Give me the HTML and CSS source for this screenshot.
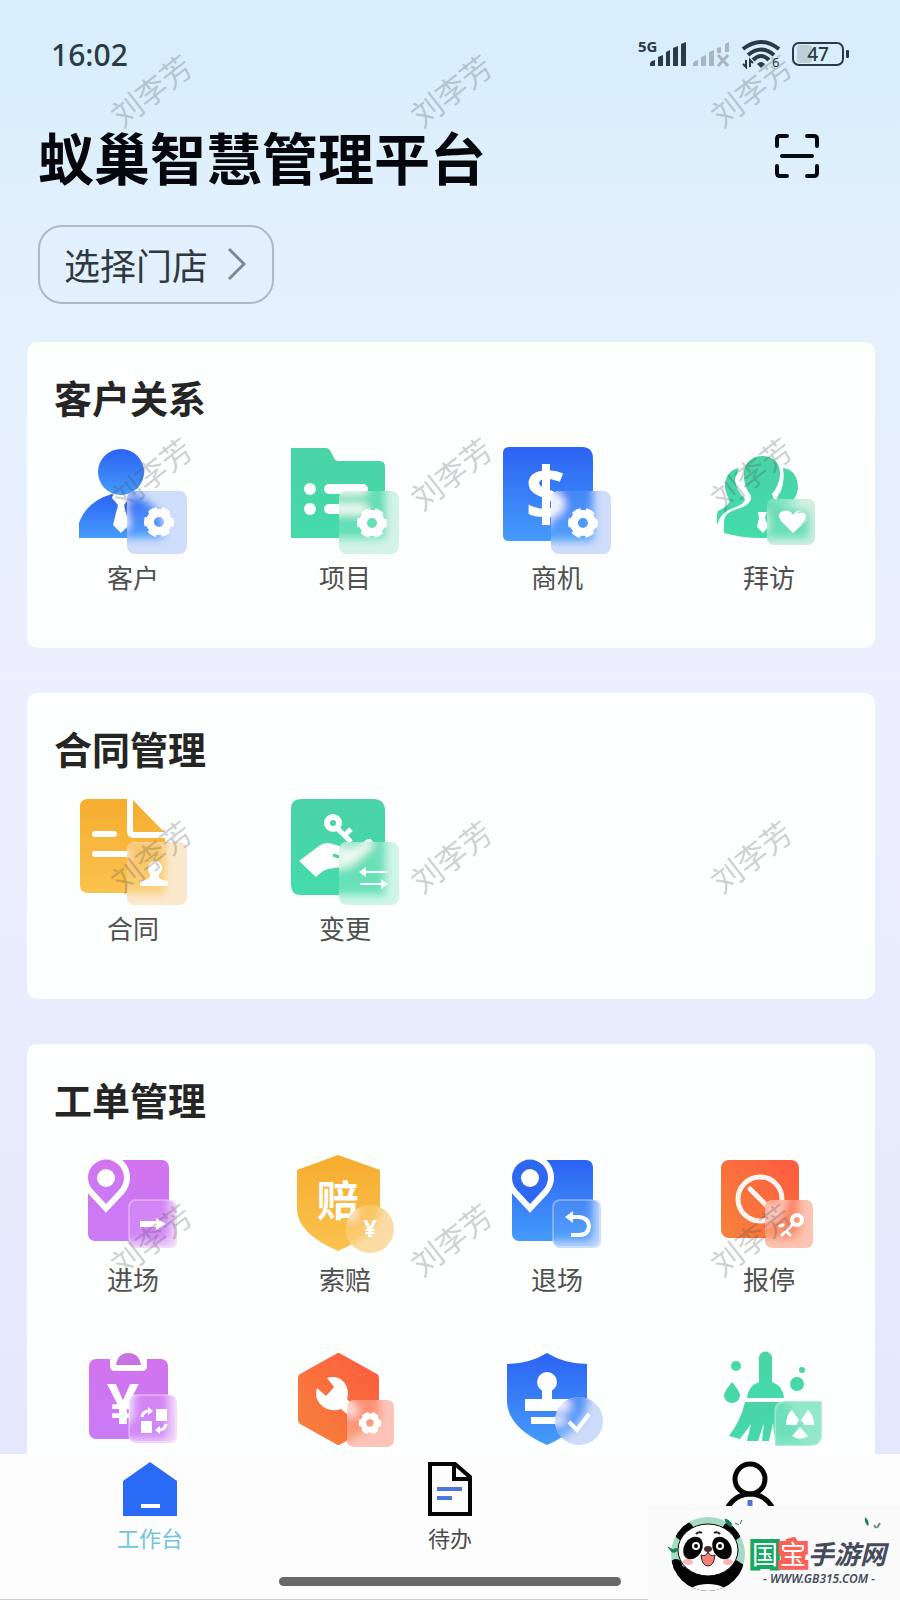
FILE: index.html
```html
<!DOCTYPE html>
<html lang="zh-CN">
<head>
    <meta charset="UTF-8">
    <meta name="viewport" content="width=device-width, initial-scale=1.0">
    <title>蚁巢智慧管理平台</title>
    <link rel="stylesheet" href="styles.css">
</head>
<body>
    <!-- shared gradients, filter and gear -->
    <svg class="defs" width="0" height="0" aria-hidden="true">
        <defs>
            <linearGradient id="blue" x1="0" y1="0" x2="0" y2="1"><stop offset="0" stop-color="#2c63f3"/><stop offset="1" stop-color="#459bfa"/></linearGradient>
            <linearGradient id="green" x1="0" y1="0" x2="0" y2="1"><stop offset="0" stop-color="#4ad3a6"/><stop offset="1" stop-color="#44dbaa"/></linearGradient>
            <linearGradient id="yellow" x1="0" y1="0" x2="0" y2="1"><stop offset="0" stop-color="#f6ac2f"/><stop offset="1" stop-color="#fac34f"/></linearGradient>
            <linearGradient id="purple" x1="0" y1="0" x2="0" y2="1"><stop offset="0" stop-color="#d273ee"/><stop offset="1" stop-color="#ca7bf7"/></linearGradient>
            <linearGradient id="red" x1="1" y1="0" x2="0" y2="1"><stop offset="0" stop-color="#fd5a3f"/><stop offset="1" stop-color="#f7833c"/></linearGradient>
            <filter id="frost" x="-20%" y="-20%" width="140%" height="140%"><feGaussianBlur stdDeviation="4"/></filter>
            <clipPath id="clip-big"><rect x="48" y="44" width="60" height="63" rx="8"/></clipPath>
            <clipPath id="clip-visit"><rect x="52" y="52" width="48" height="46" rx="7"/></clipPath>
            <clipPath id="clip-small"><rect x="50" y="51" width="48" height="48" rx="7"/></clipPath>
            <clipPath id="clip-coin"><circle cx="79" cy="80" r="24"/></clipPath>
            <clipPath id="clip-gear"><rect x="56" y="56" width="47" height="47" rx="7"/></clipPath>
            <clipPath id="clip-check"><circle cx="76" cy="77" r="24"/></clipPath>
            <clipPath id="clip-leaf"><path d="M72 57H107V90Q107 102 95 102H60V69Q60 57 72 57Z"/></clipPath>
            <g id="gear" fill="none" stroke="#fff">
                <circle r="9" stroke-width="8"/>
                <circle r="12" stroke-width="6" stroke-dasharray="8 4.566" stroke-dashoffset="4"/>
            </g>
        </defs>
    </svg>

    <div class="app">
        <div class="status-bar">
            <span class="time">16:02</span>
            <div class="status-icons">
                <svg width="49" height="28" viewBox="0 0 49 28" fill="#2b3b45">
                    <text x="0" y="12" class="network">5G</text>
                    <path d="M12 26v-2q0-3 5-4v6zM20 17l5-2v11h-5zM28 12l4-2v16h-4zM35 8l5-2v20h-5zM43 4l5-2v24h-5z"/>
                </svg>
                <svg width="37" height="28" viewBox="0 0 37 28" fill="#a9b5bf">
                    <path d="M0 26v-2q0-3 5-4v6zM8 17l5-2v11H8zM16 12l5-2v16h-5zM24 8l4-1v6h-4zM32 4l4-2v10h-4z"/>
                    <path d="M25 15l10 11M35 15L25 26" stroke="#a9b5bf" stroke-width="3"/>
                </svg>
                <svg width="38" height="28" viewBox="0 0 38 28" fill="none" stroke="#2b3b45" stroke-width="4">
                    <path d="M1 9Q19-5 37 9M6 15q13-11 26 0M11 20q8-8 16 0"/>
                    <path d="M15 24q4-4 8 0l-4 4z" fill="#2b3b45" stroke="none"/>
                    <path d="M4 20v7l-3-3M8 27v-7l3 3" stroke-width="2"/>
                    <text x="30" y="27" class="wifi-gen">6</text>
                </svg>
                <svg width="57" height="28" viewBox="0 0 57 28">
                    <rect x="5" y="5" width="15" height="18" rx="3" fill="#bccfd9"/>
                    <rect x="1" y="3" width="50" height="22" rx="6" fill="none" stroke="#2b3b45" stroke-width="2"/>
                    <rect x="54" y="10" width="3" height="8" rx="1" fill="#2b3b45"/>
                    <text x="26" y="21" class="battery">47</text>
                </svg>
            </div>
        </div>

        <header class="header">
            <div class="title-row">
                <h1>蚁巢智慧管理平台</h1>
                <button class="scan-btn" type="button" aria-label="扫一扫">
                    <svg width="44" height="44" viewBox="0 0 44 44" fill="none" stroke="#050a10" stroke-width="4" stroke-linecap="round">
                        <path d="M2 12V5q0-3 3-3h7M32 2h7q3 0 3 3v7M42 32v7q0 3-3 3h-7M12 42H5q-3 0-3-3v-7M7 22h30"/>
                    </svg>
                </button>
            </div>
            <button class="store-btn" type="button">
                选择门店
                <svg width="18" height="32" viewBox="0 0 18 32" fill="none" stroke="#7f8b93" stroke-width="3"><path d="M1 1l15 15L1 31"/></svg>
            </button>
        </header>

        <main class="content">
            <section class="card">
                <h2>客户关系</h2>
                <div class="grid">
                    <button class="item" type="button">
                        <svg viewBox="0 0 108 108">
                            <g id="customer">
                                <path d="M0 91V76Q8 54 33 47L42 54L51 47Q76 54 84 76V91Z" fill="url(#blue)"/>
                                <circle cx="42" cy="25" r="23" fill="url(#blue)"/>
                                <path d="M34 48l8 5 8-5 1 3-6 7 5 20-8 8-8-8 5-20-6-7z" fill="#fff"/>
                            </g>
                            <g clip-path="url(#clip-big)"><rect width="108" height="108" fill="#cfddfa"/><use href="#customer" filter="url(#frost)" opacity=".9"/></g>
                            <use href="#gear" transform="translate(80 75)"/>
                        </svg>
                        <span>客户</span>
                    </button>
                    <button class="item" type="button">
                        <svg viewBox="0 0 108 108">
                            <g id="project">
                                <path d="M0 1H35Q38 1 40 5L43 11Q44 14 48 14H88Q94 14 94 20V91H0Z" fill="url(#green)"/>
                                <path d="M38 42H72M38 62H72" stroke="#fff" stroke-width="10" stroke-linecap="round"/>
                                <circle cx="19" cy="42" r="6" fill="#fff"/><circle cx="19" cy="62" r="6" fill="#fff"/>
                            </g>
                            <g clip-path="url(#clip-big)"><rect width="108" height="108" fill="#d3f3e7"/><use href="#project" filter="url(#frost)" opacity=".8"/></g>
                            <use href="#gear" transform="translate(81 76)"/>
                        </svg>
                        <span>项目</span>
                    </button>
                    <button class="item" type="button">
                        <svg viewBox="0 0 108 108">
                            <g id="chance">
                                <path d="M6 0H79Q90 0 90 12V94H6Q0 94 0 88V6Q0 0 6 0Z" fill="url(#blue)"/>
                                <path d="M43 17V78" stroke="#fff" stroke-width="8"/>
                                <text x="43" y="73" class="dollar">$</text>
                            </g>
                            <g clip-path="url(#clip-big)"><rect width="108" height="108" fill="#cfddfa"/><use href="#chance" filter="url(#frost)" opacity=".9"/></g>
                            <use href="#gear" transform="translate(80 76)"/>
                        </svg>
                        <span>商机</span>
                    </button>
                    <button class="item" type="button">
                        <svg viewBox="0 0 108 108">
                            <g id="visit">
                                <path d="M24 21Q10 24 10 40Q11 48 15 54Q12 60 3 64Q1 70 2 78Q5 66 18 61Q30 57 30 52Q20 42 20 32Z" fill="url(#green)"/>
                                <path d="M68 21Q83 23 83 42Q82 48 78 54H62Q60 53 66 44Q70 32 68 21Z" fill="url(#green)"/>
                                <path d="M47 9C58 9 66 17 65 28Q64 39 57 47Q58 55 72 59L94 67V91H47Q26 91 9 86V74Q9 66 22 62Q37 58 36 49Q28 38 29 27C29 16 37 9 47 9Z" fill="url(#green)"/>
                                <path d="M43 65h9l-2 6 3 9-5 6-6-6 2-9z" fill="#fff"/>
                            </g>
                            <g clip-path="url(#clip-visit)"><rect width="108" height="108" fill="#d0efe2"/><use href="#visit" filter="url(#frost)" opacity=".75"/></g>
                            <path d="M78 86L66 74Q61 66 68 64Q75 62 78 68Q83 61 90 65Q94 70 89 76Z" fill="#fff"/>
                            <path d="M83 66Q91 62 92 70Q91 75 87 77" fill="none" stroke="#a9e6cf" stroke-width="2"/>
                        </svg>
                        <span>拜访</span>
                    </button>
                </div>
            </section>

            <section class="card">
                <h2>合同管理</h2>
                <div class="grid">
                    <button class="item" type="button">
                        <svg viewBox="0 0 108 108">
                            <g id="contract">
                                <path d="M9 1H53L86 35V95H9Q1 95 1 87V9Q1 1 9 1Z" fill="url(#yellow)"/>
                                <path d="M51 0V33Q51 37 55 37H90M16 36H35M16 56H48" fill="none" stroke="#fff" stroke-width="6" stroke-linecap="round"/>
                            </g>
                            <g clip-path="url(#clip-big)"><rect width="108" height="108" fill="#fbe8cc"/><use href="#contract" filter="url(#frost)" opacity=".7"/></g>
                            <path d="M69 70a7 7 0 1 1 14 0q0 4-3 6v3q1 3 9 4v5H61v-5q8-1 10-4v-3q-2-2-2-6z" fill="#fff"/>
                        </svg>
                        <span>合同</span>
                    </button>
                    <button class="item" type="button">
                        <svg viewBox="0 0 108 108">
                            <g id="change">
                                <path d="M10 1H82Q94 1 94 13V97H10Q0 97 0 87V11Q0 1 10 1Z" fill="url(#green)"/>
                                <circle cx="42" cy="25" r="6" fill="none" stroke="#fff" stroke-width="6"/>
                                <path d="M46 30l14 14M54 37l6-6" stroke="#fff" stroke-width="5"/>
                                <path d="M8 63L28 48Q34 43 42 46L54 50Q62 53 67 48L75 42Q81 39 82 45Q82 49 76 53L62 65Q58 69 50 69L37 71Q32 72 25 79Z" fill="#fff"/>
                                <path d="M42 57q6 2 10 3" stroke="#44d3a6" stroke-width="3"/>
                            </g>
                            <g clip-path="url(#clip-big)"><rect width="108" height="108" fill="#d0f5e8"/><use href="#change" filter="url(#frost)" opacity=".75"/></g>
                            <path d="M96 74H72M69 86H94" stroke="#fff" stroke-width="2"/>
                            <path d="M75 69v10l-7-5zM90 81v10l7-5z" fill="#fff"/>
                        </svg>
                        <span>变更</span>
                    </button>
                </div>
            </section>

            <section class="card">
                <h2>工单管理</h2>
                <div class="grid">
                    <button class="item" type="button">
                        <svg viewBox="0 0 108 108">
                            <g id="enter">
                                <rect x="9" y="11" width="81" height="81" rx="7" fill="url(#purple)"/>
                                <path d="M27 55L14 41A18 18 0 1 1 40 41Z" fill="none" stroke="#fff" stroke-width="12"/>
                                <path d="M27 55L14 41A18 18 0 1 1 40 41Z" fill="url(#purple)"/>
                                <circle cx="27" cy="29" r="9" fill="#fff"/>
                            </g>
                            <g clip-path="url(#clip-small)"><rect width="108" height="108" fill="#efd0fb"/><use href="#enter" filter="url(#frost)" opacity=".85"/></g>
                            <rect x="50" y="51" width="47" height="47" rx="7" class="glass"/>
                            <path d="M61 72H77V69L87 75L77 81V78H61Z" fill="#fff"/>
                        </svg>
                        <span>进场</span>
                    </button>
                    <button class="item" type="button">
                        <svg viewBox="0 0 108 108">
                            <g id="claim">
                                <path d="M47 6L89 21V60Q89 84 47 102Q6 84 6 60V21Z" fill="url(#yellow)"/>
                                <text x="47" y="67" class="claim-text">赔</text>
                            </g>
                            <g clip-path="url(#clip-coin)"><rect width="108" height="108" fill="#fbdca6"/><use href="#claim" filter="url(#frost)" opacity=".65"/></g>
                            <text x="79" y="88" class="coin-text">¥</text>
                        </svg>
                        <span>索赔</span>
                    </button>
                    <button class="item" type="button">
                        <svg viewBox="0 0 108 108">
                            <g id="leave">
                                <rect x="9" y="11" width="81" height="81" rx="7" fill="url(#blue)"/>
                                <path d="M27 55L14 41A18 18 0 1 1 40 41Z" fill="none" stroke="#fff" stroke-width="12"/>
                                <path d="M27 55L14 41A18 18 0 1 1 40 41Z" fill="#2d68f3"/>
                                <circle cx="27" cy="29" r="9" fill="#fff"/>
                            </g>
                            <g clip-path="url(#clip-small)"><rect width="108" height="108" fill="#bcd4fd"/><use href="#leave" filter="url(#frost)" opacity=".9"/></g>
                            <rect x="50" y="51" width="47" height="47" rx="7" class="glass"/>
                            <path d="M66 68H76Q86 69 86 78Q85 86 76 86H68" fill="none" stroke="#fff" stroke-width="4"/>
                            <path d="M62 68l8-6v12z" fill="#fff"/>
                        </svg>
                        <span>退场</span>
                    </button>
                    <button class="item" type="button">
                        <svg viewBox="0 0 108 108">
                            <g id="stop">
                                <rect x="6" y="11" width="78" height="78" rx="8" fill="url(#red)"/>
                                <circle cx="45" cy="50" r="22" fill="none" stroke="#fff5ee" stroke-width="5"/>
                                <path d="M35 40L60 65" stroke="#fff5ee" stroke-width="5" stroke-linecap="round"/>
                            </g>
                            <g clip-path="url(#clip-small)"><rect width="108" height="108" fill="#fcc4b3"/><use href="#stop" filter="url(#frost)" opacity=".65"/></g>
                            <circle cx="82" cy="71" r="5" fill="none" stroke="#fff" stroke-width="4"/>
                            <path d="M78 75L67 86M71 82l4 4M65 77l3-1" stroke="#fff" stroke-width="3" stroke-linecap="round"/>
                        </svg>
                        <span>报停</span>
                    </button>
                    <button class="item" type="button" aria-label="费用">
                        <svg viewBox="0 0 108 108">
                            <g id="fee">
                                <rect x="10" y="15" width="79" height="80" rx="7" fill="url(#purple)"/>
                                <path d="M31 14H68V22Q68 27 63 27H36Q31 27 31 22Z" fill="#fff"/>
                                <path d="M37 21Q39 9 49 9Q60 9 62 21Z" fill="#c873e4"/>
                                <text x="44" y="80" class="yuan">¥</text>
                            </g>
                            <g clip-path="url(#clip-small)"><rect width="108" height="108" fill="#f1d4fb"/><use href="#fee" filter="url(#frost)" opacity=".85"/></g>
                            <rect x="50" y="51" width="47" height="47" rx="7" class="glass"/>
                            <path d="M77 65h11v12H77zM62 77h11v12H62z" fill="#fff"/>
                            <path d="M63 73q1-6 7-6M87 80q-1 6-7 6" fill="none" stroke="#fff" stroke-width="3"/>
                            <path d="M69 63l5 4-5 4zM81 82l-5 4 5 4z" fill="#fff"/>
                        </svg>
                    </button>
                    <button class="item" type="button" aria-label="维修">
                        <svg viewBox="0 0 108 108">
                            <g id="repair">
                                <path d="M45 10Q47 8 50 10L86 30Q88 31 88 34V76Q88 78 86 80L50 100Q47 102 45 100L9 80Q7 78 7 76V34Q7 31 9 30Z" fill="url(#red)"/>
                                <path d="M36 34Q46 31 53 38Q59 46 56 55L68 67L61 74L50 65Q38 69 29 60Q23 53 26 44L35 52L43 43Z" fill="#fff"/>
                            </g>
                            <g clip-path="url(#clip-gear)"><rect width="108" height="108" fill="#fcc4b8"/><use href="#repair" filter="url(#frost)" opacity=".55"/></g>
                            <use href="#gear" transform="translate(79 79) scale(.75)"/>
                        </svg>
                    </button>
                    <button class="item" type="button" aria-label="审核">
                        <svg viewBox="0 0 108 108">
                            <g id="audit">
                                <path d="M44 9Q62 20 84 20V59Q82 84 44 101Q6 84 4 59V20Q26 20 44 9Z" fill="url(#blue)"/>
                                <circle cx="44" cy="38" r="10" fill="#fff"/>
                                <path d="M39 44h10v11h17v12H22V55h17zM28 73h34v7H28z" fill="#fff"/>
                            </g>
                            <g clip-path="url(#clip-check)"><rect width="108" height="108" fill="#cddcfa"/><use href="#audit" filter="url(#frost)" opacity=".8"/></g>
                            <path d="M66 78l8 8 12-16" fill="none" stroke="#fff" stroke-width="4"/>
                        </svg>
                    </button>
                    <button class="item" type="button" aria-label="保洁">
                        <svg viewBox="0 0 108 108">
                            <g id="clean" fill="url(#green)">
                                <path d="M44 14A6 6 0 0 1 57 14V38Q68 42 69 54H32Q33 42 44 38Z"/>
                                <path d="M30 58H72L88 98H60L58 79L54 97H47L49 79L43 97H32L36 80L25 95L14 92Q26 76 30 58Z"/>
                                <circle cx="21" cy="22" r="5"/><circle cx="82" cy="40" r="7"/><circle cx="87" cy="26" r="3"/>
                                <path d="M17 38Q25 48 25 51A8 8 0 0 1 9 51Q9 48 17 38Z"/>
                            </g>
                            <g clip-path="url(#clip-leaf)"><rect width="108" height="108" fill="#93e8cb"/><use href="#clean" filter="url(#frost)" opacity=".5"/></g>
                            <path d="M72 57H107V90Q107 102 95 102H60V69Q60 57 72 57Z" class="glass"/>
                            <path d="M77 66L84 76L81 81H71Q71 71 77 66ZM93 66L86 76L90 81H99Q99 71 93 66ZM85 83L93 92Q85 98 77 92Z" fill="#fff"/>
                        </svg>
                    </button>
                </div>
            </section>
        </main>

        <footer class="footer">
            <nav class="tabs">
                <a class="tab active" href="#">
                    <svg viewBox="0 0 54 54"><path d="M27 0L54 19V54H0V19Z" fill="#2a6bf6"/><path d="M18 44H37" stroke="#fff" stroke-width="4"/></svg>
                    <span>工作台</span>
                </a>
                <a class="tab" href="#">
                    <svg viewBox="0 0 54 54" fill="none" stroke="#050505" stroke-width="4"><path d="M7 2H32L47 15V52H7ZM31 2V17H46"/><path d="M14 27H39M14 36H29" stroke="#4a76de"/></svg>
                    <span>待办</span>
                </a>
                <a class="tab" href="#" aria-label="我的">
                    <svg viewBox="0 0 54 54" fill="none" stroke="#050505" stroke-width="5"><circle cx="27" cy="17" r="15"/><path d="M2 57a25 25 0 0 1 50 0"/><path d="M27 38V50" stroke="#4a76de"/></svg>
                </a>
            </nav>
            <div class="home-bar"></div>
        </footer>

        <div class="watermarks" aria-hidden="true">
            <span>刘李芳</span><span>刘李芳</span><span>刘李芳</span>
            <span>刘李芳</span><span>刘李芳</span><span>刘李芳</span>
            <span>刘李芳</span><span>刘李芳</span><span>刘李芳</span>
            <span>刘李芳</span><span>刘李芳</span><span>刘李芳</span>
        </div>

        <div class="site-logo">
            <svg width="84" height="80" viewBox="0 0 84 80">
                <defs><clipPath id="panda"><circle cx="44" cy="41" r="37"/></clipPath></defs>
                <g clip-path="url(#panda)">
                    <rect width="84" height="80" fill="#a6dbc3"/>
                    <path d="M5 52Q12 46 20 54L68 54Q76 46 82 54V82H5Z" fill="#050505"/>
                    <circle cx="20" cy="18" r="10" fill="#050505"/><circle cx="68" cy="18" r="10" fill="#050505"/>
                    <ellipse cx="44" cy="80" rx="20" ry="9" fill="#fff"/>
                    <circle cx="70" cy="55" r="8"/><circle cx="12" cy="52" r="6"/>
                </g>
                <ellipse cx="44" cy="37" rx="30" ry="26" fill="#fff" stroke="#050505"/>
                <ellipse cx="29" cy="35" rx="9" ry="12" transform="rotate(30 29 35)" fill="#050505"/>
                <ellipse cx="58" cy="35" rx="9" ry="12" transform="rotate(-30 58 35)" fill="#050505"/>
                <circle cx="32" cy="33" r="4" fill="#fff"/><circle cx="56" cy="33" r="4" fill="#fff"/>
                <circle cx="32" cy="33" r="2"/><circle cx="56" cy="33" r="2"/>
                <ellipse cx="44" cy="36" rx="4" ry="3" fill="#4a2b2e"/>
                <path d="M37 42Q42 44 44 39Q46 44 51 42Q50 53 44 53Q38 53 37 42Z" fill="#f48078" stroke="#222"/>
                <ellipse cx="24" cy="49" rx="5" ry="3" fill="#fcb7b2"/><ellipse cx="64" cy="49" rx="5" ry="3" fill="#fcb7b2"/>
                <path d="M32 21q3-3 6-1M50 20q3-2 6 1" fill="none" stroke="#222" stroke-width="2"/>
                <path d="M61 6Q68 8 68 14Q62 12 61 6ZM71 10l4 2M78 7l-2 4M4 34l5 3Q13 34 14 37Q11 40 8 39Z" fill="#16805c" stroke="#16805c"/>
            </svg>
            <div class="site-name">
                <svg class="leaves" width="18" height="12" viewBox="0 0 18 12"><path d="M1 0Q6 4 4 9Q0 6 1 0Z" fill="#16805c"/><path d="M10 8l2 3M16 6l-3 5" stroke="#65927f" stroke-width="2"/></svg>
                <p class="brand"><span class="guo">国</span><span class="bao">宝</span>手游网</p>
                <p class="url">- WWW.GB315.COM -</p>
            </div>
        </div>
    </div>
</body>
</html>
```
FILE: styles.css
```css
* {
    margin: 0;
    padding: 0;
    box-sizing: border-box;
}

body {
    font-family: "Noto Sans CJK SC", "Noto Sans", sans-serif;
    color: #222;
}

button {
    border: none;
    background: none;
    font-family: inherit;
    color: inherit;
    cursor: pointer;
}

svg {
    display: block;
    overflow: visible;
}

.defs {
    position: absolute;
}

.app {
    position: relative;
    display: flex;
    flex-direction: column;
    height: 100vh;
    overflow: hidden;
    background: linear-gradient(180deg, #d7effb 0%, #d9effb 6%, #e0f0fc 12%, #e4f1fd 21%, #e6effd 32%, #eceffd 42%, #e8edfd 62%, #e8edfd 70%, #e3e8fc 90%);
}

/* status bar */
.status-bar {
    display: flex;
    justify-content: space-between;
    align-items: center;
    height: 108px;
    padding: 0 51px;
}

.time {
    font-family: "Noto Sans", sans-serif;
    font-size: 30px;
    font-weight: 500;
    color: #2b3b45;
}

.status-icons {
    display: flex;
    gap: 12px;
}

.status-icons svg:first-child {
    margin-right: -6px;
}

.status-icons text {
    font-family: "Noto Sans", sans-serif;
    fill: #2b3b45;
    stroke: none;
}

.network {
    font-size: 15px;
    font-weight: 700;
}

.wifi-gen {
    font-size: 13px;
}

.battery {
    font-size: 19px;
    font-weight: 500;
    text-anchor: middle;
}

/* header */
.header {
    padding: 8px 38px 38px;
}

.title-row {
    display: flex;
    justify-content: space-between;
    align-items: center;
    margin-bottom: 29px;
    padding-right: 43px;
}

h1 {
    font-size: 56px;
    line-height: 80px;
    font-weight: 700;
    color: #05070d;
}

.store-btn {
    display: flex;
    align-items: center;
    gap: 20px;
    padding: 12px 26px 13px 24px;
    border: 2px solid #aeb9c0;
    border-radius: 24px;
    font-size: 36px;
    line-height: 50px;
    color: #2d3840;
}

/* cards */
.content {
    display: flex;
    flex-direction: column;
    flex: 1;
    gap: 45px;
    min-height: 0;
    padding: 0 25px 0 27px;
    overflow: hidden;
}

.card {
    flex: none;
    padding: 33px 0 53px;
    border-radius: 10px;
    background: #fdfefe;
}

h2 {
    margin-bottom: 28px;
    padding-left: 27px;
    font-size: 38px;
    line-height: 44px;
    font-weight: 700;
    color: #252525;
}

.grid {
    display: grid;
    grid-template-columns: repeat(4, 1fr);
    row-gap: 47px;
}

.item {
    display: flex;
    flex-direction: column;
    align-items: center;
    gap: 4px;
    font-size: 26px;
    line-height: 36px;
    color: #505050;
}

.item svg {
    width: 108px;
    height: 108px;
}

.item text {
    font-family: "Noto Sans", "Noto Sans CJK SC", sans-serif;
    text-anchor: middle;
    fill: #fff;
}

.item .dollar {
    font-size: 72px;
    font-weight: 700;
}

.item .yuan {
    font-size: 56px;
    font-weight: 700;
}

.item .claim-text {
    font-size: 42px;
    font-weight: 700;
}

.item .coin-text {
    font-size: 24px;
    font-weight: 700;
}

.glass {
    fill: none;
    stroke: #fff;
    stroke-opacity: 0.3;
    stroke-width: 2;
}

/* bottom tabs */
.footer {
    padding: 8px 0 13px;
    border-bottom: 1px solid #ccc;
    background: #fdfdfd;
}

.tabs {
    display: grid;
    grid-template-columns: repeat(3, 1fr);
}

.tab {
    display: flex;
    flex-direction: column;
    align-items: center;
    gap: 6px;
    font-size: 22px;
    line-height: 30px;
    color: #4c4c4c;
    text-decoration: none;
}

.tab.active {
    color: #70c6d8;
}

.tab svg {
    width: 54px;
    height: 54px;
}

.home-bar {
    width: 38%;
    height: 9px;
    margin: 25px auto 0;
    border-radius: 5px;
    background: #686868;
}

/* user name stamped across the page */
.watermarks {
    position: absolute;
    top: -102px;
    left: 0;
    right: 0;
    display: grid;
    grid-template-columns: repeat(3, 1fr);
    grid-auto-rows: 383px;
    place-items: center;
    pointer-events: none;
}

.watermarks span {
    font-size: 31px;
    color: rgba(70, 75, 80, 0.26);
    transform: rotate(-38deg);
}

.site-logo {
    position: absolute;
    right: 0;
    bottom: 0;
    display: flex;
    align-items: center;
    gap: 4px;
    width: 252px;
    height: 94px;
    padding-left: 16px;
    background: #fafafa;
}

.site-name {
    position: relative;
    padding-top: 20px;
    color: #454a5c;
    font-style: italic;
    white-space: nowrap;
}

.brand {
    font-size: 26px;
    line-height: 32px;
    font-weight: 700;
}

.guo,
.bao {
    margin-right: 2px;
    color: #fff;
    font-style: normal;
    font-weight: 400;
    paint-order: stroke fill;
}

.guo {
    -webkit-text-stroke: 8px #16a862;
}

.bao {
    -webkit-text-stroke: 8px #fb6256;
}

.url {
    font-family: "Noto Sans", sans-serif;
    font-size: 12px;
    line-height: 20px;
    font-weight: 600;
    text-align: center;
}

.leaves {
    position: absolute;
    top: 0;
    right: 4px;
}
```
